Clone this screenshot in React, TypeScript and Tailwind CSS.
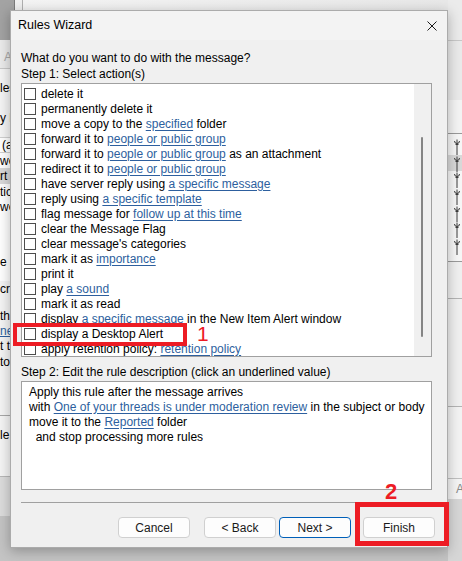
import React from 'react';

type Part = string | { link: string };

const actions: Part[][] = [
  ['delete it'],
  ['permanently delete it'],
  ['move a copy to the ', { link: 'specified' }, ' folder'],
  ['forward it to ', { link: 'people or public group' }],
  ['forward it to ', { link: 'people or public group' }, ' as an attachment'],
  ['redirect it to ', { link: 'people or public group' }],
  ['have server reply using ', { link: 'a specific message' }],
  ['reply using ', { link: 'a specific template' }],
  ['flag message for ', { link: 'follow up at this time' }],
  ['clear the Message Flag'],
  ["clear message's categories"],
  ['mark it as ', { link: 'importance' }],
  ['print it'],
  ['play ', { link: 'a sound' }],
  ['mark it as read'],
  ['display ', { link: 'a specific message' }, ' in the New Item Alert window'],
  ['display a Desktop Alert'],
  ['apply retention policy: ', { link: 'retention policy' }],
];

const description: Part[][] = [
  ['Apply this rule after the message arrives'],
  ['with ', { link: 'One of your threads is under moderation review' }, ' in the subject or body'],
  ['move it to the ', { link: 'Reported' }, ' folder'],
  ['  and stop processing more rules'],
];

function Parts({ parts }: { parts: Part[] }) {
  return (
    <>
      {parts.map((p, i) =>
        typeof p === 'string' ? (
          <span key={i}>{p}</span>
        ) : (
          <span key={i} className="text-[#2d5f9e] underline underline-offset-[2px] decoration-[#2d5f9e]">
            {p.link}
          </span>
        )
      )}
    </>
  );
}

function RuleIcon() {
  return (
    <svg width="8" height="17" viewBox="0 0 8 17" fill="none" stroke="#3a3a3a" strokeWidth="1">
      <path d="M1.5 3 a2.5 2.5 0 0 0 5 0" />
      <path d="M4 1.5 V17" />
      <path d="M2.5 6.5 h3" />
    </svg>
  );
}

function WinButton({ label, primary }: { label: string; primary?: boolean }) {
  return (
    <button
      className={`w-[72px] h-[21px] rounded-[4px] border bg-[#fdfdfd] text-[12px] leading-none text-[#1a1a1a] ${
        primary ? 'border-[#005fb8]' : 'border-[#d0d0d0]'
      }`}
    >
      {label}
    </button>
  );
}

export default function App() {
  return (
    <div className="relative w-[462px] h-[561px] overflow-hidden bg-[#c4c4c4] font-['Liberation_Sans',Arial,sans-serif] text-[12px] text-black">
      {/* window behind the dialog */}
      <div className="flex h-full">
        {/* left pane */}
        <div className="w-[10px] flex flex-col overflow-hidden whitespace-nowrap">
          <div className="h-[40px] bg-[#a3a3a3] shrink-0" />
          <div className="h-[28px] bg-[#ebebeb] shrink-0 flex items-center pl-[4px] pt-[6px] text-[#a8a8a8]">A</div>
          <div className="h-px bg-[#c8c8c8] shrink-0" />
          <div className="h-[68px] bg-[#f5f5f5] shrink-0 flex flex-col">
            <div className="h-[13px]" />
            <div className="h-[12px] leading-[12px]">les</div>
            <div className="h-[18px]" />
            <div className="h-[12px] leading-[12px]">y R</div>
          </div>
          <div className="h-[16px] shrink-0 bg-white border-y border-[#d0d0d0] flex items-center pl-[2px] leading-none">(a</div>
          <div className="h-[15px] shrink-0 bg-white flex items-center leading-none">we</div>
          <div className="h-[16px] shrink-0 bg-[#d9d9d9] flex items-center leading-none">rt</div>
          <div className="h-[15px] shrink-0 bg-white flex items-center leading-none">tic</div>
          <div className="h-[15px] shrink-0 bg-white flex items-center leading-none">we</div>
          <div className="h-[40px] shrink-0 bg-white" />
          <div className="h-[15px] shrink-0 bg-white flex items-center leading-none">e a</div>
          <div className="h-[12px] shrink-0 bg-white" />
          <div className="h-[15px] shrink-0 bg-[#f5f5f5] flex items-center leading-none">cr</div>
          <div className="h-[12px] shrink-0 bg-[#f5f5f5]" />
          <div className="h-[15px] shrink-0 bg-[#f5f5f5] flex items-center leading-none">thi</div>
          <div className="h-[15px] shrink-0 bg-[#f5f5f5] flex items-center leading-none text-[#2d5f9e] underline">ne</div>
          <div className="h-[16px] shrink-0 bg-[#f5f5f5] flex items-center leading-none">t t</div>
          <div className="h-[15px] shrink-0 bg-[#f5f5f5] flex items-center leading-none">to</div>
          <div className="h-[46px] shrink-0 bg-[#f5f5f5]" />
          <div className="h-px shrink-0 bg-[#a8a8a8]" />
          <div className="h-[60px] shrink-0 bg-[#f5f5f5] flex flex-col">
            <div className="h-[12px]" />
            <div className="h-[14px] flex items-center leading-none">le</div>
          </div>
          <div className="h-px shrink-0 bg-[#b8b8b8]" />
          <div className="h-[39px] shrink-0 bg-[#dcdcdc]" />
          <div className="flex-1 bg-[#c4c4c4]" />
        </div>

        {/* middle strip above and below the dialog */}
        <div className="flex-1 flex flex-col">
          <div className="h-[10px] flex shrink-0">
            <div className="w-[4px] bg-[#a3a3a3]" />
            <div className="w-px bg-[#7a7a7a]" />
            <div className="w-[7px] bg-[#f0f0f0]" />
            <div className="w-px bg-[#b0b0b0]" />
            <div className="flex-1 bg-gradient-to-r from-[#f4f4f4] to-[#e8e8e8]" />
          </div>
          <div className="flex-1" />
        </div>

        {/* right pane */}
        <div className="w-[14px] flex flex-col overflow-hidden">
          <div className="h-[40px] shrink-0 bg-[#ebebeb]" />
          <div className="h-px shrink-0 bg-[#c8c8c8]" />
          <div className="h-[59px] shrink-0 bg-[#eaeaea]" />
          <div className="h-[33px] shrink-0 bg-[#f4f4f4]" />
          <div className="h-px shrink-0 bg-[#9a9a9a]" />
          <div className="h-[127px] shrink-0 bg-[#f7f7f7] pt-[4px] flex flex-col">
            {[0, 1, 2, 3, 4, 5, 6].map((i) => (
              <div key={i} className={`h-[16.7px] flex justify-end pr-[1px] ${i === 1 ? 'bg-[#d9d9d9]' : ''}`}>
                <RuleIcon />
              </div>
            ))}
          </div>
          <div className="h-px shrink-0 bg-[#9a9a9a]" />
          <div className="h-[36px] shrink-0 bg-[#f0f0f0]" />
          <div className="h-px shrink-0 bg-[#b4b4b4]" />
          <div className="h-[107px] shrink-0 bg-[#f0f0f0]" />
          <div className="h-px shrink-0 bg-[#b4b4b4]" />
          <div className="h-[71px] shrink-0 bg-[#f3f3f3]" />
          <div className="h-px shrink-0 bg-[#c0c0c0]" />
          <div className="h-[20px] shrink-0 bg-[#f5f5f5] flex items-center pl-[8px] text-[#8a8a8a] leading-none">A</div>
          <div className="flex-1 bg-[#d6d6d6]" />
        </div>
      </div>

      {/* Rules Wizard dialog */}
      <div className="absolute left-[10px] top-[10px] w-[438px] h-[538px] border border-[#ababab] bg-[#f0f0f0] shadow-[0_3px_12px_rgba(0,0,0,0.28)] flex flex-col">
        <div className="h-[29px] shrink-0 bg-[#f3f3f3] flex items-center justify-between pl-[7px] pr-[10px]">
          <span className="leading-none text-[12.5px]">Rules Wizard</span>
          <svg width="10" height="10" viewBox="0 0 10 10" stroke="#1a1a1a" strokeWidth="1">
            <path d="M0.5 0.5 L9.5 9.5 M9.5 0.5 L0.5 9.5" />
          </svg>
        </div>

        <div className="pl-[10px] flex flex-col">
          <div className="pt-[10px] leading-[16px]">What do you want to do with the message?</div>
          <div className="leading-[16px]">Step 1: Select action(s)</div>

          <div className="mt-[1px] w-[411px] h-[274px] border border-[#a0a0a0] bg-white flex overflow-hidden">
            <div className="flex-1 pt-[2px] pl-[2px] flex flex-col">
              {actions.map((parts, i) => (
                <div key={i} className="h-[15px] shrink-0 flex items-center gap-[5px] whitespace-pre leading-none">
                  <span className="w-[12px] h-[12px] shrink-0 border border-[#4d4d4d] bg-white" />
                  <span>
                    <Parts parts={parts} />
                  </span>
                </div>
              ))}
            </div>
            <div className="w-[17px] shrink-0 bg-[#f0f0f0]">
              <div className="ml-[7px] mt-[53px] w-[2px] h-[200px] rounded-full bg-[#858585]" />
            </div>
          </div>

          <div className="mt-[7px] leading-[16px]">Step 2: Edit the rule description (click an underlined value)</div>
          <div className="mt-[1px] w-[411px] h-[109px] border border-[#a0a0a0] bg-white pt-[2px] pl-[7px]">
            {description.map((parts, i) => (
              <div key={i} className="h-[15px] flex items-center whitespace-pre leading-none">
                <Parts parts={parts} />
              </div>
            ))}
          </div>

          <div className="mt-[12px] w-[411px] h-px bg-[#a0a0a0]" />
        </div>

        <div className="mt-[14px] flex justify-end pr-[12px]">
          <WinButton label="Cancel" />
          <div className="w-[14px]" />
          <WinButton label="< Back" />
          <div className="w-[3px]" />
          <WinButton label="Next >" primary />
          <div className="w-[12px]" />
          <WinButton label="Finish" />
        </div>
      </div>

      {/* step markers */}
      <div className="absolute left-[13px] top-[323px] w-[174px] h-[23px] border-[4px] border-[#ed1c24]" />
      <div className="absolute left-[197px] top-[323px] text-[21px] leading-[22px] text-[#ed1c24]">1</div>
      <div className="absolute left-[355px] top-[502px] w-[94px] h-[44px] border-[5px] border-[#ed1c24]" />
      <div className="absolute left-[385px] top-[481px] text-[22px] leading-[22px] font-bold text-[#ed1c24]">2</div>
    </div>
  );
}
